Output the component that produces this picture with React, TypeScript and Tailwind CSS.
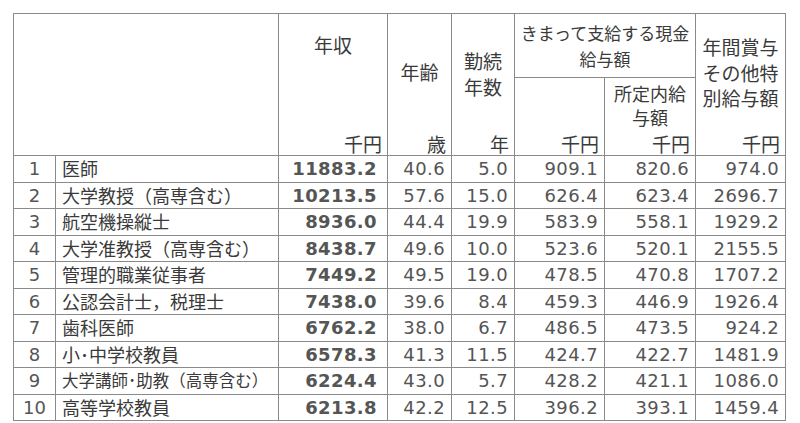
const rows = [
  { no: 1, name: "医師", income: "11883.2", age: "40.6", years: "5.0", cash: "909.1", fixed: "820.6", bonus: "974.0" },
  { no: 2, name: "大学教授（高専含む）", income: "10213.5", age: "57.6", years: "15.0", cash: "626.4", fixed: "623.4", bonus: "2696.7" },
  { no: 3, name: "航空機操縦士", income: "8936.0", age: "44.4", years: "19.9", cash: "583.9", fixed: "558.1", bonus: "1929.2" },
  { no: 4, name: "大学准教授（高専含む）", income: "8438.7", age: "49.6", years: "10.0", cash: "523.6", fixed: "520.1", bonus: "2155.5" },
  { no: 5, name: "管理的職業従事者", income: "7449.2", age: "49.5", years: "19.0", cash: "478.5", fixed: "470.8", bonus: "1707.2" },
  { no: 6, name: "公認会計士，税理士", income: "7438.0", age: "39.6", years: "8.4", cash: "459.3", fixed: "446.9", bonus: "1926.4" },
  { no: 7, name: "歯科医師", income: "6762.2", age: "38.0", years: "6.7", cash: "486.5", fixed: "473.5", bonus: "924.2" },
  { no: 8, name: "小･中学校教員", income: "6578.3", age: "41.3", years: "11.5", cash: "424.7", fixed: "422.7", bonus: "1481.9" },
  { no: 9, name: "大学講師･助教（高専含む）", income: "6224.4", age: "43.0", years: "5.7", cash: "428.2", fixed: "421.1", bonus: "1086.0", small: true },
  { no: 10, name: "高等学校教員", income: "6213.8", age: "42.2", years: "12.5", cash: "396.2", fixed: "393.1", bonus: "1459.4" },
];

const cell = "border-r border-b border-[#8a8a8a]";
const head = `${cell} flex flex-col text-[19px] text-[#3a3a3a] font-['Noto_Sans_CJK_JP',sans-serif]`;
const unit = "self-end pr-[5px] leading-[22px] mt-auto";
const num = `${cell} flex items-center justify-end pr-[6px] text-[18px] tracking-[0.4px] text-[#555] font-['DejaVu_Sans',sans-serif]`;

export default function App() {
  return (
    <div className="min-h-screen bg-white pt-[13px] pl-[13px]">
      <div className="grid w-fit grid-cols-[42px_223px_109px_64px_63px_90px_91px_90px] grid-rows-[64px_78px_repeat(10,26.5px)] border-l border-t border-[#8a8a8a]">
        {/* header */}
        <div className={`${cell} col-span-2 row-span-2`} />
        <div className={`${head} row-span-2 items-center pt-[18px]`}>
          <span className="leading-[26px]">年収</span>
          <span className={`${unit} pr-[4px]`}>千円</span>
        </div>
        <div className={`${head} row-span-2 items-center pt-[45px]`}>
          <span className="leading-[26px]">年齢</span>
          <span className={unit}>歳</span>
        </div>
        <div className={`${head} row-span-2 items-center pt-[34px]`}>
          <span className="leading-[26px] text-center">勤続<br />年数</span>
          <span className={unit}>年</span>
        </div>
        <div className={`${cell} col-span-2 flex items-center justify-center text-center text-[17px] leading-[26px] text-[#3a3a3a] font-['Noto_Sans_CJK_JP',sans-serif]`}>
          <span>きまって支給する現金<br />給与額</span>
        </div>
        <div className={`${head} row-span-2 items-center pt-[20px]`}>
          <span className="leading-[25.5px] text-center">年間賞与<br />その他特<br />別給与額</span>
          <span className={unit}>千円</span>
        </div>
        <div className={head}>
          <span className={unit}>千円</span>
        </div>
        <div className={`${head} items-center pt-[3px]`}>
          <span className="text-[18px] leading-[24px] text-center">所定内給<br />与額</span>
          <span className={unit}>千円</span>
        </div>

        {/* body */}
        {rows.map((r) => (
          <div key={r.no} className="contents">
            <div className={`${cell} flex items-center justify-center text-[18px] text-[#555] font-['DejaVu_Sans',sans-serif]`}>
              {r.no}
            </div>
            <div
              className={`${cell} flex items-center pl-[6px] whitespace-nowrap text-[#3a3a3a] font-['Noto_Sans_CJK_JP',sans-serif] ${
                r.small ? "text-[16.5px]" : "text-[18px]"
              }`}
            >
              {r.name}
            </div>
            <div className={`${num} pr-[10px] font-bold text-[#1a1a1a] tracking-[0.2px]`}>{r.income}</div>
            <div className={num}>{r.age}</div>
            <div className={num}>{r.years}</div>
            <div className={num}>{r.cash}</div>
            <div className={num}>{r.fixed}</div>
            <div className={num}>{r.bonus}</div>
          </div>
        ))}
      </div>
    </div>
  );
}
